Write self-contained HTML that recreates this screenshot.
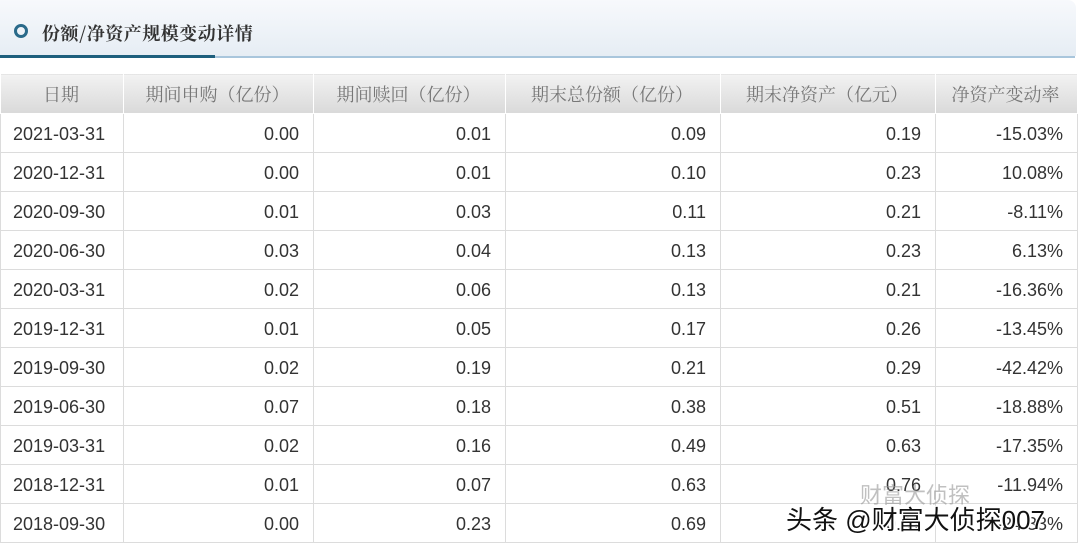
<!DOCTYPE html>
<html><head><meta charset="utf-8"><style>
body{margin:0;width:1080px;height:546px;overflow:hidden;background:#fff;font-family:"Liberation Sans","Noto Sans CJK SC",sans-serif;position:relative}
.hd{position:absolute;left:0;top:0;width:1076px;height:56px;background:linear-gradient(#f7f9fc,#e6edf4);border-radius:0 8px 0 0}
.hd .c{position:absolute;left:14px;top:24px;width:8px;height:8px;border:3px solid #2a6a8a;border-radius:50%}
.hd .t{position:absolute;left:42px;top:20px;font-size:18px;color:#333;font-family:"Noto Serif CJK SC",serif;font-weight:bold;letter-spacing:0.5px}
.l1{position:absolute;left:0;top:55px;width:215px;height:3px;background:#1e5f7d}
.l2{position:absolute;left:215px;top:56px;width:860px;height:2px;background:#a9c6dc}
table{position:absolute;left:0;top:73px;border-collapse:collapse;width:1078px}
td,th{border:1px solid #dcdcdc;padding:0 14px 0 12px;font-size:18px;color:#333;line-height:20px}
th{height:39px;background:linear-gradient(#f2f2f2,#d9d9d9);font-weight:normal;color:#777;font-family:"Noto Serif CJK SC",serif;text-align:center;border-color:#fff}
td{text-align:right;padding-top:2px;height:36px;box-sizing:content-box}
td:first-child{text-align:left}
.wm{position:absolute;left:786px;top:500px;font-size:26px;color:#111;text-shadow:1px 1px 0 #fff,-1px -1px 0 #fff,2px 0 0 #fff}
.wm2{position:absolute;left:860px;top:478px;font-size:22px;color:rgba(150,150,150,.6)}
</style></head><body>
<div class="hd"><div class="c"></div><div class="t">份额/净资产规模变动详情</div></div>
<div class="l1"></div><div class="l2"></div>
<table>
<colgroup><col style="width:123px"><col style="width:190px"><col style="width:192px"><col style="width:215px"><col style="width:215px"><col></colgroup>
<tr><th>日期</th><th>期间申购（亿份）</th><th>期间赎回（亿份）</th><th>期末总份额（亿份）</th><th>期末净资产（亿元）</th><th>净资产变动率</th></tr>
<tr><td>2021-03-31</td><td>0.00</td><td>0.01</td><td>0.09</td><td>0.19</td><td>-15.03%</td></tr>
<tr><td>2020-12-31</td><td>0.00</td><td>0.01</td><td>0.10</td><td>0.23</td><td>10.08%</td></tr>
<tr><td>2020-09-30</td><td>0.01</td><td>0.03</td><td>0.11</td><td>0.21</td><td>-8.11%</td></tr>
<tr><td>2020-06-30</td><td>0.03</td><td>0.04</td><td>0.13</td><td>0.23</td><td>6.13%</td></tr>
<tr><td>2020-03-31</td><td>0.02</td><td>0.06</td><td>0.13</td><td>0.21</td><td>-16.36%</td></tr>
<tr><td>2019-12-31</td><td>0.01</td><td>0.05</td><td>0.17</td><td>0.26</td><td>-13.45%</td></tr>
<tr><td>2019-09-30</td><td>0.02</td><td>0.19</td><td>0.21</td><td>0.29</td><td>-42.42%</td></tr>
<tr><td>2019-06-30</td><td>0.07</td><td>0.18</td><td>0.38</td><td>0.51</td><td>-18.88%</td></tr>
<tr><td>2019-03-31</td><td>0.02</td><td>0.16</td><td>0.49</td><td>0.63</td><td>-17.35%</td></tr>
<tr><td>2018-12-31</td><td>0.01</td><td>0.07</td><td>0.63</td><td>0.76</td><td>-11.94%</td></tr>
<tr><td>2018-09-30</td><td>0.00</td><td>0.23</td><td>0.69</td><td>0.81</td><td>-24.33%</td></tr>
</table>
<div class="wm2">财富大侦探</div>
<div class="wm">头条 @财富大侦探007</div>
</body></html>
